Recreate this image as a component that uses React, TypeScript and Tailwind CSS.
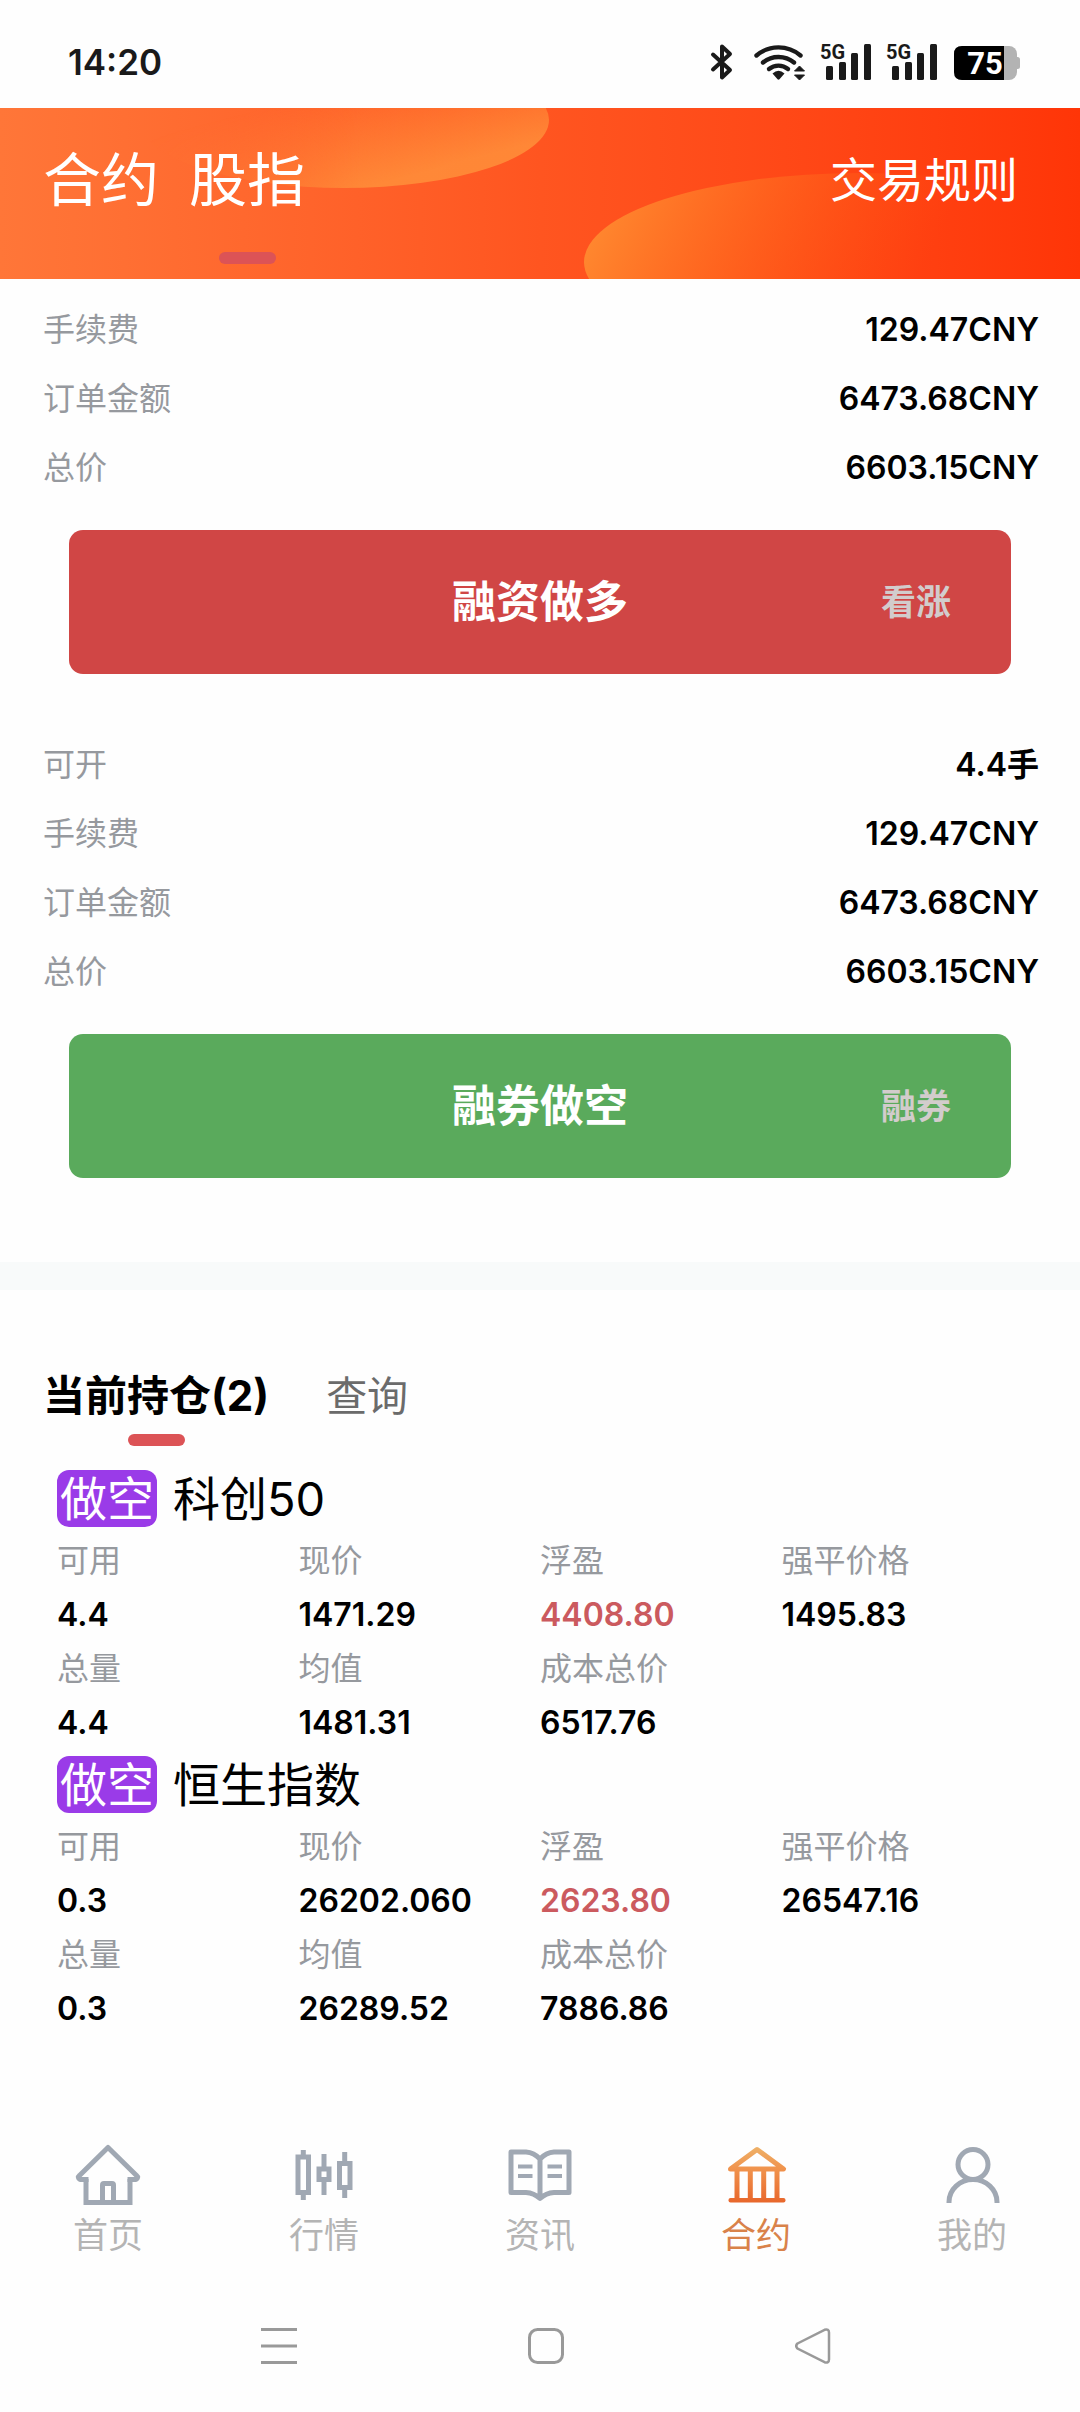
import type { ReactNode } from 'react';

const orderRows = [
  { label: '手续费', value: '129.47CNY' },
  { label: '订单金额', value: '6473.68CNY' },
  { label: '总价', value: '6603.15CNY' },
];

type Cell = { label: string; value: string; highlight?: boolean };

const positions: { side: string; name: string; cells: Cell[] }[] = [
  {
    side: '做空',
    name: '科创50',
    cells: [
      { label: '可用', value: '4.4' },
      { label: '现价', value: '1471.29' },
      { label: '浮盈', value: '4408.80', highlight: true },
      { label: '强平价格', value: '1495.83' },
      { label: '总量', value: '4.4' },
      { label: '均值', value: '1481.31' },
      { label: '成本总价', value: '6517.76' },
    ],
  },
  {
    side: '做空',
    name: '恒生指数',
    cells: [
      { label: '可用', value: '0.3' },
      { label: '现价', value: '26202.060' },
      { label: '浮盈', value: '2623.80', highlight: true },
      { label: '强平价格', value: '26547.16' },
      { label: '总量', value: '0.3' },
      { label: '均值', value: '26289.52' },
      { label: '成本总价', value: '7886.86' },
    ],
  },
];

function BluetoothIcon() {
  return (
    <svg width="24" height="40" viewBox="0 0 24 40" fill="none" stroke="#1a1a1a" strokeWidth="4" strokeLinejoin="round" strokeLinecap="round" aria-label="蓝牙">
      <path d="M3 12.500 L20 28 L12 35.500 V4.500 L20 12 L3 27.500" />
    </svg>
  );
}

function WifiIcon() {
  return (
    <svg width="52" height="40" viewBox="0 0 52 40" fill="none" aria-label="无线网络">
      <g stroke="#1a1a1a" strokeWidth="4.4" strokeLinecap="round">
        <path d="M2.5 13.5 A34 34 0 0 1 46.500 13.500" />
        <path d="M9 20.500 A24.500 24.500 0 0 1 40 20.500" />
        <path d="M15 27 A15 15 0 0 1 34 27" />
      </g>
      <path d="M18.500 31.500 Q24.500 26 30.500 31.500 L25.500 37.300 Q24.500 38.200 23.500 37.300 Z" fill="#1a1a1a" />
      <path d="M40.500 29 L45.500 24 L50.500 29 Z M40.500 33 L45.500 38 L50.500 33 Z" fill="#1a1a1a" stroke="#1a1a1a" strokeLinejoin="round" />
    </svg>
  );
}

function SignalIcon() {
  return (
    <svg width="52" height="56" viewBox="0 -8 52 56" fill="#1a1a1a" aria-label="5G 信号">
      <text x="0" y="17" fontSize="20" fontWeight="700" fontFamily="Roboto, sans-serif">5G</text>
      <rect x="6" y="24" width="7" height="14" rx="1.500" />
      <rect x="19" y="20" width="7" height="18" rx="1.500" />
      <rect x="31" y="11" width="7" height="27" rx="1.500" />
      <rect x="44" y="2" width="7" height="36" rx="1.500" />
    </svg>
  );
}

function BatteryIcon() {
  return (
    <svg width="66" height="40" viewBox="0 0 66 40" aria-label="电量">
      <rect x="0" y="4" width="63" height="34" rx="8" fill="#b3b3b3" />
      <path d="M62 15 h1.500 q2.500 0 2.500 2.500 v7 q0 2.500 -2.500 2.500 h-1.500 z" fill="#b3b3b3" />
      <path d="M8 4 H50 V38 H8 Q0 38 0 30 V12 Q0 4 8 4 Z" fill="#000" />
      <text x="31" y="32" textAnchor="middle" fontSize="31" fontWeight="700" fontFamily="Roboto, sans-serif" fill="#fff">75</text>
    </svg>
  );
}

function StatusBar() {
  return (
    <div className="flex h-[108px] items-center justify-between pt-4 pr-[60px] pl-[68px]">
      <span className="text-[35px] leading-[40px] font-semibold text-[#1a1a1a]">14:20</span>
      <div className="flex items-center">
        <BluetoothIcon />
        <div className="ml-5 flex items-center gap-[14px]">
          <WifiIcon />
          <SignalIcon />
          <SignalIcon />
        </div>
        <div className="ml-4">
          <BatteryIcon />
        </div>
      </div>
    </div>
  );
}

function HeaderBackdrop() {
  return (
    <svg className="absolute inset-0 h-full w-full" viewBox="0 0 1080 171" preserveAspectRatio="none" aria-hidden="true">
      <defs>
        <linearGradient id="blobTop" gradientUnits="userSpaceOnUse" x1="320" y1="-14" x2="345" y2="84">
          <stop offset="0" stopColor="#ff8a38" stopOpacity="0" />
          <stop offset="1" stopColor="#ff8a38" stopOpacity="0.950" />
        </linearGradient>
        <linearGradient id="blobLeft" gradientUnits="userSpaceOnUse" x1="139" y1="0" x2="360" y2="0">
          <stop offset="0" stopColor="#000" />
          <stop offset="1" stopColor="#fff" />
        </linearGradient>
        <mask id="fade" maskUnits="userSpaceOnUse" x="0" y="0" width="1080" height="171">
          <rect width="1080" height="171" fill="url(#blobLeft)" />
        </mask>
        <linearGradient id="blobBottom" gradientUnits="userSpaceOnUse" x1="590" y1="110" x2="880" y2="250">
          <stop offset="0" stopColor="#ff8a30" />
          <stop offset="1" stopColor="#ff5a10" stopOpacity="0" />
        </linearGradient>
      </defs>
      <ellipse cx="344" cy="12" rx="205" ry="68" fill="url(#blobTop)" mask="url(#fade)" />
      <ellipse cx="860" cy="154" rx="276" ry="89" fill="url(#blobBottom)" />
    </svg>
  );
}

function Header() {
  return (
    <header className="relative bg-linear-to-r from-[#ff7638] via-[#ff5520] to-[#ff3507] px-[43px] pt-9 pb-[15px] text-white">
      <HeaderBackdrop />
      <div className="relative flex items-start justify-between pr-[19px]">
        <div className="flex items-start gap-[30px]">
          <button type="button" className="text-[58px] leading-[72px] font-normal">合约</button>
          <button type="button" className="flex flex-col items-center gap-9 text-[58px] leading-[72px] font-normal">
            股指
            <span className="h-3 w-[57px] rounded-full bg-[#dc5356]" />
          </button>
        </div>
        <button type="button" className="text-[47px] leading-[72px] font-normal">交易规则</button>
      </div>
    </header>
  );
}

function InfoRow({ label, value }: { label: string; value: string }) {
  return (
    <div className="flex h-[69px] items-center justify-between text-[32px]">
      <dt className="text-[#96999e]">{label}</dt>
      <dd className="font-semibold text-black">{value}</dd>
    </div>
  );
}

function OrderButton({ title, hint, green }: { title: string; hint: string; green?: boolean }) {
  return (
    <button
      type="button"
      className={`mt-7 grid h-36 grid-cols-[1fr_auto_1fr] items-center rounded-[14px] px-[60px] text-[44px] font-bold text-white ${green ? 'bg-[#5aaa5c]' : 'bg-[#d04645]'}`}
    >
      <span />
      <span>{title}</span>
      <span className="text-right text-[35px] text-[#d2cccc]">{hint}</span>
    </button>
  );
}

function OrderPanel({ rows, children }: { rows: { label: string; value: string }[]; children: ReactNode }) {
  return (
    <div className="flex flex-col">
      <dl className="pr-[41px] pl-[43px]">
        {rows.map((row) => (
          <InfoRow key={row.label} label={row.label} value={row.value} />
        ))}
      </dl>
      <div className="flex flex-col px-[69px]">{children}</div>
    </div>
  );
}

function Position({ side, name, cells }: { side: string; name: string; cells: Cell[] }) {
  return (
    <article>
      <h2 className="flex h-[69px] items-center gap-4 text-[47px] font-normal">
        <span className="rounded-[12px] bg-[#9a3be8] px-[3px] leading-[57px] text-white">{side}</span>
        <span className="leading-[57px] text-black">{name}</span>
      </h2>
      <dl className="grid grid-cols-4 pt-px text-[32px] leading-[54px]">
        {cells.map((cell) => (
          <div key={cell.label}>
            <dt className="text-[#96999e]">{cell.label}</dt>
            <dd className={`font-semibold ${cell.highlight ? 'text-[#cb5a5e]' : 'text-black'}`}>{cell.value}</dd>
          </div>
        ))}
      </dl>
    </article>
  );
}

function NavIcon({ children }: { children: ReactNode }) {
  return (
    <svg width="72" height="72" viewBox="0 0 72 72" fill="none" stroke="#a0a8b3" strokeWidth="5" strokeLinejoin="round" aria-hidden="true">
      {children}
    </svg>
  );
}

const navItems = [
  {
    label: '首页',
    icon: (
      <NavIcon>
        <path d="M14 40.500 H8 Q5 38.500 7.500 36.500 L36 8.500 L64.500 36.500 Q67 38.500 64 40.500 H58" strokeLinecap="square" />
        <path d="M14 40 V63.500 H58 V40" strokeLinejoin="miter" />
        <path d="M30.500 63 V46 Q30.500 44.500 32 44.500 H40 Q41.500 44.500 41.500 46 V63" />
      </NavIcon>
    ),
  },
  {
    label: '行情',
    icon: (
      <NavIcon>
        <g strokeLinejoin="miter">
          <rect x="10" y="18" width="10.500" height="35.500" />
          <path d="M15.300 11 V18 M15.300 54 V61" />
          <rect x="31" y="30" width="10" height="10.500" />
          <path d="M36 15 V30 M36 41 V56" />
          <rect x="51.500" y="24.500" width="10.500" height="24" />
          <path d="M56.700 13 V24 M56.700 49 V59" />
        </g>
      </NavIcon>
    ),
  },
  {
    label: '资讯',
    icon: (
      <NavIcon>
        <path d="M7 13 H22 Q30 13.500 36 20 Q42 13.500 50 13 H65 V53.500 H50 Q42 54 36 59.500 Q30 54 22 53.500 H7 Z M36 20 V59" />
        <path d="M14 27.500 H28.500 M14 37 H28.500 M43.500 27.500 H58 M43.500 37 H58" strokeWidth="4" />
      </NavIcon>
    ),
  },
  {
    label: '合约',
    active: true,
    icon: (
      <NavIcon>
        <defs>
          <linearGradient id="bank" gradientUnits="userSpaceOnUse" x1="0" y1="8" x2="0" y2="64">
            <stop offset="0" stopColor="#eeb168" />
            <stop offset="0.400" stopColor="#f0924c" />
            <stop offset="1" stopColor="#e8662b" />
          </linearGradient>
        </defs>
        <g stroke="url(#bank)">
          <path d="M10.500 30 L37 10.500 L63.500 30 Z" />
          <path d="M17 30 V61 M30.300 30 V61 M43.700 30 V61 M57 30 V61" />
          <path d="M10.500 61 H63.500 V61.500 H10.500 Z" strokeWidth="4" />
        </g>
      </NavIcon>
    ),
  },
  {
    label: '我的',
    icon: (
      <NavIcon>
        <circle cx="37" cy="25.500" r="15" />
        <path d="M13 64 V63 A24 22.500 0 0 1 61 63 V64" />
      </NavIcon>
    ),
  },
];

function BottomNav() {
  return (
    <nav className="grid grid-cols-5 pt-3 pb-[21px]">
      {navItems.map((item) => (
        <a key={item.label} href="#" className="flex flex-col items-center">
          {item.icon}
          <span className={`text-[35px] leading-[48px] ${item.active ? 'text-[#d9824a]' : 'text-[#b4b4b4]'}`}>{item.label}</span>
        </a>
      ))}
    </nav>
  );
}

function SystemBar() {
  return (
    <div className="flex h-[132px] items-center justify-center gap-[231px] pl-[11px]">
      <button type="button" aria-label="最近任务">
        <svg width="36" height="36" viewBox="0 0 36 36" stroke="#999" strokeWidth="3">
          <path d="M0 1.500 H36 M0 18 H36 M0 34.500 H36" />
        </svg>
      </button>
      <button type="button" aria-label="主屏幕">
        <svg width="36" height="36" viewBox="0 0 36 36" fill="none" stroke="#999" strokeWidth="3">
          <rect x="1.500" y="1.500" width="33" height="33" rx="8" />
        </svg>
      </button>
      <button type="button" aria-label="返回">
        <svg width="36" height="36" viewBox="0 0 36 36" fill="none" stroke="#999" strokeWidth="2.500">
          <path d="M2.500 15.500 L29.500 1.800 Q34 0.500 34 4.500 V31.500 Q34 35.500 29.500 34.200 L2.500 20.500 Q0 18 2.500 15.500 Z" />
        </svg>
      </button>
    </div>
  );
}

export default function App() {
  return (
    <div className="flex min-h-screen flex-col bg-[#fefefe] font-['Inter','Noto_Sans_CJK_SC',sans-serif]">
      <StatusBar />
      <Header />
      <main className="flex-1">
        <section className="flex flex-col gap-14 pt-4 pb-[84px]">
          <OrderPanel rows={orderRows}>
            <OrderButton title="融资做多" hint="看涨" />
          </OrderPanel>
          <OrderPanel rows={[{ label: '可开', value: '4.4手' }, ...orderRows]}>
            <OrderButton title="融券做空" hint="融券" green />
          </OrderPanel>
        </section>
        <div className="h-7 bg-[#f8fafa]" />
        <section className="pt-[76px]">
          <div className="flex items-start gap-[57px] pl-[43px] text-[41px] leading-[60px]">
            <button type="button" className="flex flex-col items-center gap-2 text-[42px] font-bold text-black">
              当前持仓(2)
              <span className="h-3 w-[57px] rounded-full bg-[#dc5356]" />
            </button>
            <button type="button" className="text-[#6b6b6b]">查询</button>
          </div>
          <div className="px-[57px] pt-[18px]">
            {positions.map((position) => (
              <Position key={position.name} side={position.side} name={position.name} cells={position.cells} />
            ))}
          </div>
        </section>
      </main>
      <BottomNav />
      <SystemBar />
    </div>
  );
}
